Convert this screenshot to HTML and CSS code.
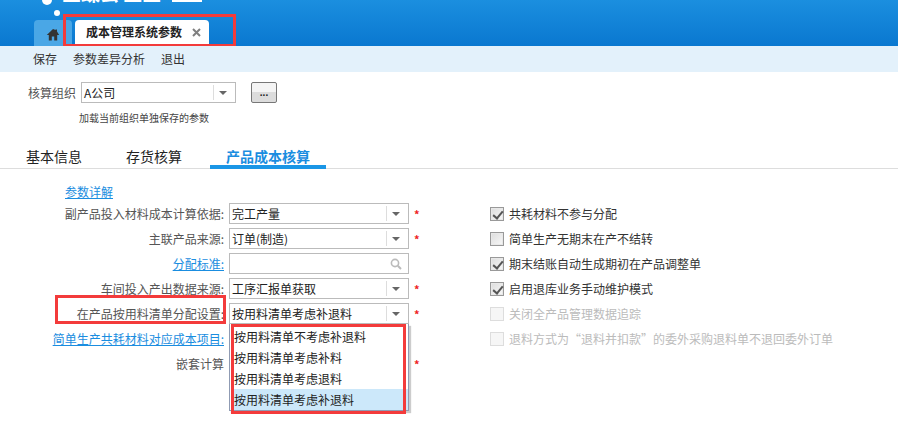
FILE: index.html
```html
<!DOCTYPE html>
<html lang="zh">
<head>
<meta charset="utf-8">
<title>成本管理系统参数</title>
<link rel="stylesheet" href="styles.css">
</head>
<body>
<header class="top">
  <div class="brand">
    <i class="dot dot-a"></i><i class="dot dot-b"></i>
    <span class="brand-text">金蝶云 星空</span>
    <i class="brand-bar"></i>
  </div>
  <nav class="page-tabs">
    <a class="home-tab"><svg width="14" height="13" viewBox="0 0 14 13"><path d="M7 1 0.8 7h2V12.5h3V8.5h2.4v4h3V7h2L11 3.4V1.5H9.5v.6L7 1z" fill="#333"/></svg></a>
    <a class="page-tab"><b>成本管理系统参数</b><svg class="close" width="9" height="9" viewBox="0 0 9 9"><path d="M1 1 8 8M8 1 1 8" stroke="#808080" stroke-width="2"/></svg></a>
  </nav>
  <i class="mark mark-tab"></i>
</header>
<div class="toolbar"><span>保存</span><span>参数差异分析</span><span>退出</span></div>
<section class="org">
  <div class="org-row">
    <label class="org-label">核算组织</label>
    <div class="combo org-combo"><span class="val">A公司</span><i class="arrow"></i></div>
    <button class="more">...</button>
  </div>
  <p class="org-note">加载当前组织单独保存的参数</p>
</section>
<nav class="tabs">
  <a>基本信息</a><a>存货核算</a><a class="on">产品成本核算</a>
</nav>
<main class="form">
  <div class="col-left">
    <a class="link detail">参数详解</a>
    <div class="row"><label>副产品投入材料成本计算依据:</label><div class="combo"><span class="val">完工产量</span><i class="arrow"></i></div><em>*</em></div>
    <div class="row"><label>主联产品来源:</label><div class="combo"><span class="val">订单(制造)</span><i class="arrow"></i></div><em>*</em></div>
    <div class="row"><label><a class="link">分配标准:</a></label><div class="combo"><span class="val"></span><svg class="search" width="12" height="12" viewBox="0 0 12 12"><circle cx="5" cy="5" r="3.6" fill="none" stroke="#bbb" stroke-width="1.6"/><path d="M7.8 7.8 11 11" stroke="#bbb" stroke-width="2"/></svg></div></div>
    <div class="row"><label>车间投入产出数据来源:</label><div class="combo"><span class="val">工序汇报单获取</span><i class="arrow"></i></div><em>*</em></div>
    <div class="row"><label class="marked">在产品按用料清单分配设置:<i class="mark mark-label"></i></label>
      <div class="combo"><span class="val">按用料清单考虑补退料</span><i class="arrow"></i>
        <ul class="menu">
          <li>按用料清单不考虑补退料</li>
          <li>按用料清单考虑补料</li>
          <li>按用料清单考虑退料</li>
          <li class="sel">按用料清单考虑补退料</li>
        </ul>
        <i class="mark mark-menu"></i>
      </div><em>*</em></div>
    <div class="row"><label><a class="link">简单生产共耗材料对应成本项目:</a></label></div>
    <div class="row"><label>嵌套计算</label><div class="blank"></div><em>*</em></div>
  </div>
  <div class="col-right">
    <label class="chk"><i class="box on"></i>共耗材料不参与分配</label>
    <label class="chk"><i class="box"></i>简单生产无期末在产不结转</label>
    <label class="chk"><i class="box on"></i>期末结账自动生成期初在产品调整单</label>
    <label class="chk"><i class="box on"></i>启用退库业务手动维护模式</label>
    <label class="chk off"><i class="box"></i>关闭全产品管理数据追踪</label>
    <label class="chk off"><i class="box"></i>退料方式为“退料并扣款”的委外采购退料单不退回委外订单</label>
  </div>
</main>
</body>
</html>
```
FILE: styles.css
```css
* { box-sizing: border-box; }
html, body { margin: 0; height: 442px; overflow: hidden; background: #fff; }
body { font: 12px/16px "Noto Sans CJK SC", "Liberation Sans", sans-serif; color: #222; }
i, em { font-style: normal; }
.top { position: relative; height: 46px; background: linear-gradient(#1b8fdf, #0a78d0); display: flex; align-items: flex-end; padding-left: 34px; overflow: hidden; }
.brand { position: absolute; left: 42px; top: 0; width: 170px; height: 18px; }
.brand-text { position: absolute; left: 20px; top: -17px; color: #fff; font-size: 19px; line-height: 20px; font-weight: 700; white-space: nowrap; }
.brand-bar { position: absolute; left: 130px; top: 0; width: 30px; height: 2px; background: #fff; }
.dot { position: absolute; background: #fff; border-radius: 50%; }
.dot-a { left: 0; top: -5px; width: 10px; height: 10px; }
.dot-b { left: 12px; top: 10px; width: 6px; height: 6px; }
.page-tabs { display: flex; gap: 3px; height: 26px; }
.home-tab { width: 38px; background: #4aa7e6; border-radius: 4px 4px 0 0; display: flex; align-items: center; justify-content: center; padding-top: 2px; }
.page-tab { width: 134px; height: 24px; background: #fff; border-radius: 4px 4px 0 0; display: flex; align-items: center; justify-content: space-between; padding: 0 8px 0 11px; font-size: 12px; color: #222; }
.page-tab b { font-weight: 700; }
.close { flex: none; }
.mark { position: absolute; border: 3px solid #f33b3b; pointer-events: none; }
.mark-tab { left: 63px; top: 14px; width: 173px; height: 33px; }
.toolbar { height: 26px; background: #e3f1fb; display: flex; align-items: center; gap: 16px; padding-left: 33px; font-size: 12px; color: #333; }
.org { height: 72px; padding: 0 0 0 28px; }
.org-row { display: flex; align-items: center; padding-top: 10px; }
.org-label { width: 53px; color: #555; }
.combo { position: relative; display: flex; align-items: center; width: 180px; height: 21px; border: 1px solid #bbb; background: #fff; flex: none; }
.org-combo { width: 155px; }
.val { flex: 1; padding-left: 2px; font-size: 12px; white-space: nowrap; }
.arrow { width: 22px; height: 15px; border-left: 1px solid #ddd; position: relative; flex: none; }
.arrow::after { content: ""; position: absolute; left: 5px; top: 6px; border: 4px solid transparent; border-top: 4px solid #666; border-bottom: 0; }
.more { margin-left: 15px; width: 26px; height: 21px; border: 1px solid #777; border-radius: 2px; background: linear-gradient(#f4f4f4 50%, #dcdcdc 50%); padding: 0; font: 700 10px/14px "Liberation Sans", sans-serif; color: #222; }
.org-note { margin: 8px 0 0 51px; font-size: 10px; line-height: 13px; color: #444; }
.tabs { height: 25px; border-bottom: 1px solid #ddd; display: flex; padding-left: 26px; font-size: 14px; }
.tabs a { line-height: 20px; height: 25px; padding-top: 2px; margin-right: 44px; }
.tabs a.on { margin-left: -16px; width: 116px; text-align: center; color: #1a8de0; font-weight: 700; border-bottom: 4px solid #1a96e6; }
.form { display: flex; }
.col-left { width: 490px; padding-top: 14px; }
.detail { display: block; margin: 0 0 1px 65px; line-height: 17px; }
.link { color: #1a8de0; text-decoration: underline; }
.row { display: flex; align-items: center; height: 25px; }
.row label { position: relative; width: 224px; text-align: right; color: #555; white-space: nowrap; flex: none; margin-right: 5px; }
.row em { color: #e22; margin-left: 5px; font-size: 11px; font-weight: 700; }
.blank { width: 180px; flex: none; }
.search { margin-right: 6px; flex: none; }
.menu { position: absolute; left: -1px; top: 20px; width: 180px; margin: 0; padding: 2px 0 0 4px; height: 87px; list-style: none; background: #fff; border: 1px solid #8f9bb3; border-top: 0; box-shadow: 2px 2px 1px #ccc; z-index: 2; }
.menu li { height: 21px; line-height: 21px; white-space: nowrap; color: #222; }
.menu li.sel { background: #cce8fa; margin-left: -3px; padding-left: 3px; }
.mark-menu { left: 1px; top: 20px; width: 175px; height: 90px; z-index: 3; }
.mark-label { left: -169px; top: -11px; width: 171px; height: 29px; }
.row label .mark-label { left: auto; right: -2px; }
.col-right { padding-top: 32px; }
.chk { display: flex; align-items: center; height: 25px; color: #333; font-size: 12px; white-space: nowrap; }
.chk.off { color: #bbb; }
.box { position: relative; width: 14px; height: 14px; margin-right: 5px; border: 1px solid #999; box-shadow: inset 0 0 0 1px #e8e8e8; background: linear-gradient(135deg, #ddd, #f8f8f8); flex: none; }
.box.on::after { content: ""; position: absolute; left: 4px; top: 1px; width: 4px; height: 8px; border: solid #555; border-width: 0 2px 2px 0; transform: rotate(40deg); }
.off .box { border-color: #ddd; background: #f6f6f6; box-shadow: none; }
```
